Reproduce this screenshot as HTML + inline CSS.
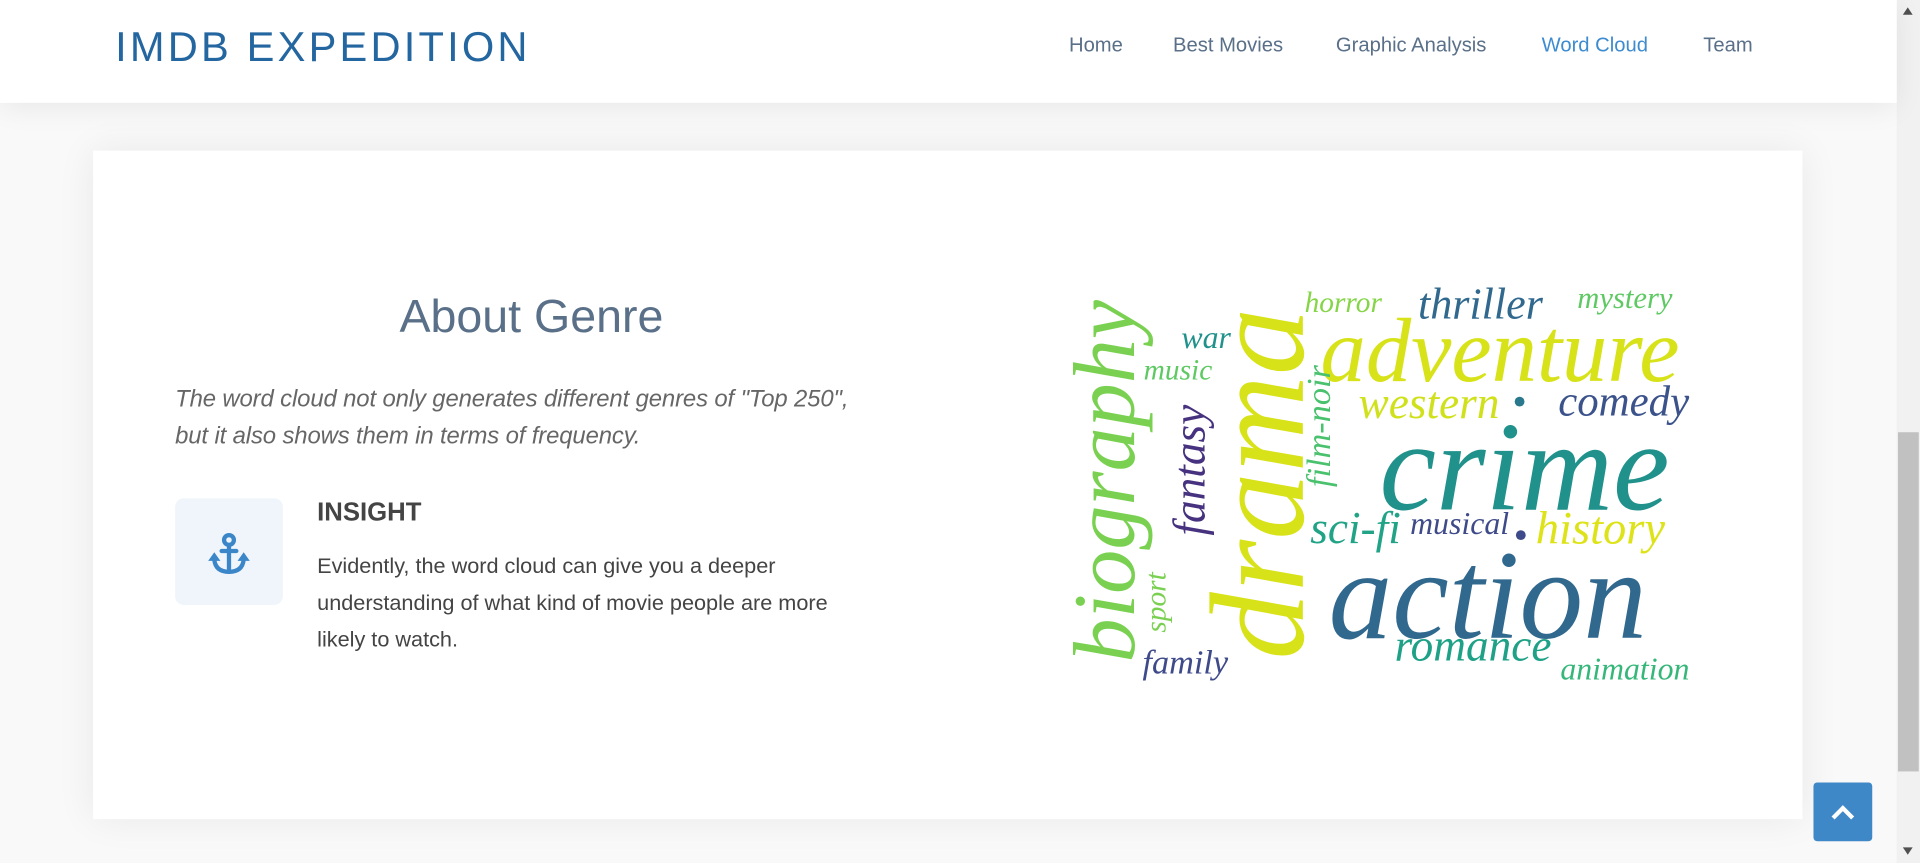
<!DOCTYPE html>
<html><head><meta charset="utf-8"><style>
html,body{margin:0;padding:0;overflow:hidden;background:#fafafa;width:1920px;height:863px}
#w{position:absolute;left:0;top:0;width:1568px;height:705px;transform:scale(1.22449);transform-origin:0 0;font-family:"Liberation Sans",sans-serif;background:#f9f9f9}
.hdr{position:absolute;left:0;top:0;width:1549px;height:84px;background:#fff;box-shadow:0 4px 22px rgba(0,0,0,.07);z-index:2}
.logo{position:absolute;left:94px;top:20px;font-size:34px;letter-spacing:2.6px;color:#2466a0;font-weight:300}
.nav a{position:absolute;top:28px;font-size:16.5px;color:#5a7089;text-decoration:none}
.card{position:absolute;left:76px;top:123px;width:1396px;height:546px;background:#fff;box-shadow:0 0 30px rgba(0,0,0,.07)}
h2{position:absolute;left:143px;width:582px;top:238px;margin:0;text-align:center;font-size:38px;font-weight:400;color:#5a7089}
.it{position:absolute;left:143px;top:311px;width:600px;font-style:italic;font-size:19.5px;line-height:30px;color:#666;letter-spacing:-.1px;white-space:nowrap}
.ib{position:absolute;left:143px;top:407px;width:88px;height:87px;border-radius:7px;background:#eff5fb}
.ins{position:absolute;left:259px;top:407px;font-size:21px;font-weight:bold;color:#444}
.p{position:absolute;left:259px;top:447px;width:480px;font-size:17.7px;line-height:30px;color:#444;white-space:nowrap}
.wc span{position:absolute;font-family:"Liberation Serif",serif;font-style:italic;white-space:nowrap;line-height:1;transform:translate(-50%,-50%)}
.wc span.r{transform:translate(-50%,-50%) rotate(-90deg)}
.dot{position:absolute;width:8px;height:8px;border-radius:50%}
.sb{position:absolute;left:1549px;top:0;width:19px;height:705px;background:#f1f1f1}
.th{position:absolute;left:1550px;top:353px;width:17px;height:277px;background:#c1c1c1}
.up{position:absolute;left:1481px;top:639px;width:48px;height:48px;border-radius:3px;background:#3f88c8}
</style></head><body><div id="w">
<div class="hdr"><div class="logo">IMDB EXPEDITION</div>
<div class="nav"><a style="left:873px">Home</a><a style="left:958px">Best Movies</a><a style="left:1091px">Graphic Analysis</a><a style="left:1259px;color:#3d8bd0">Word Cloud</a><a style="left:1391px">Team</a></div></div>
<div class="card"></div>
<h2>About Genre</h2>
<div class="it">The word cloud not only generates different genres of "Top 250",<br>but it also shows them in terms of frequency.</div>
<div class="ib"><svg width="88" height="87" viewBox="0 0 88 87"><g fill="none" stroke="#3b86c8" stroke-width="3.5" stroke-linecap="round"><circle cx="44" cy="34" r="4"/><line x1="44" y1="38" x2="44" y2="60"/><line x1="38" y1="43" x2="50" y2="43"/><path d="M32 50 Q33 60 44 60 Q55 60 56 50"/></g><path d="M27 51 L32 44 L37 51Z M51 51 L56 44 L61 51Z" fill="#3b86c8"/></svg></div>
<div class="ins">INSIGHT</div>
<div class="p">Evidently, the word cloud can give you a deeper<br>understanding of what kind of movie people are more<br>likely to watch.</div>
<div class="wc">
<span class="r" style="left:902px;top:393px;font-size:72px;color:#7ad151">biography</span>
<span class="r" style="left:1027px;top:395px;font-size:110px;color:#d8e219">drama</span>
<span style="left:1097px;top:248px;font-size:24px;color:#86d549">horror</span>
<span style="left:1209px;top:248px;font-size:36px;color:#31688e">thriller</span>
<span style="left:1327px;top:244px;font-size:25px;color:#5ec962">mystery</span>
<span style="left:985px;top:276px;font-size:26px;color:#21918c">war</span>
<span style="left:962px;top:303px;font-size:24px;color:#5ec962">music</span>
<span style="left:1225px;top:287px;font-size:74px;color:#d8e219">adventure</span>
<span class="r" style="left:972px;top:384px;font-size:37px;color:#46327e">fantasy</span>
<span class="r" style="left:1078px;top:348px;font-size:28px;color:#4ac16d">film-noir</span>
<span style="left:1167px;top:330px;font-size:37px;color:#d0e11c">western</span>
<span style="left:1326px;top:328px;font-size:35px;color:#3b528b">comedy</span>
<span style="left:1245px;top:382px;font-size:104px;color:#21918c">crime</span>
<span style="left:1107px;top:432px;font-size:37px;color:#20a386">sci-fi</span>
<span style="left:1192px;top:428px;font-size:26px;color:#3e4a89">musical</span>
<span style="left:1307px;top:432px;font-size:38px;color:#dde318">history</span>
<span style="left:1215px;top:487px;font-size:104px;color:#31688e">action</span>
<span class="r" style="left:945px;top:492px;font-size:24px;color:#7ad151">sport</span>
<span style="left:968px;top:542px;font-size:28px;color:#3e4a89">family</span>
<span style="left:1203px;top:528px;font-size:37px;color:#1fa187">romance</span>
<span style="left:1327px;top:547px;font-size:26px;color:#35b779">animation</span>
</div>
<div class="dot" style="left:1237px;top:324px;background:#2a788e"></div>
<div class="dot" style="left:1238px;top:433px;background:#3e4a89"></div>
<div class="sb"></div><div class="th"></div>
<svg style="position:absolute;left:1553px;top:5px" width="10" height="8"><path d="M1 7 L5 1 L9 7Z" fill="#505050"/></svg>
<svg style="position:absolute;left:1553px;top:691px" width="10" height="8"><path d="M1 1 L5 7 L9 1Z" fill="#505050"/></svg>
<div class="up"><svg width="48" height="48"><path d="M16 29 L24 21 L32 29" fill="none" stroke="#fff" stroke-width="3.5"/></svg></div>
</div></body></html>
